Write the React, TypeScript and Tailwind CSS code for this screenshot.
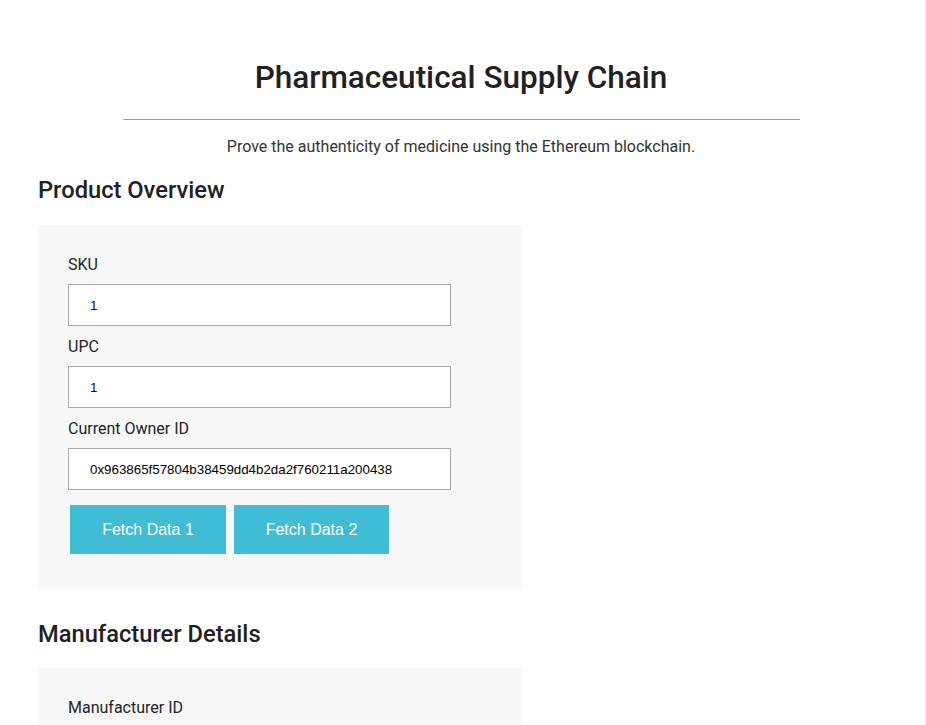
import React from "react";

type FieldProps = {
  label: string;
  value: string;
  valueClass?: string;
};

function Field({ label, value, valueClass }: FieldProps) {
  return (
    <div className="flex flex-col">
      <label className="text-[16px] leading-[24px] text-[#212529] mb-[7px]">{label}</label>
      <input
        readOnly
        value={value}
        className={`w-[383px] h-[42px] border border-[#a9a9a9] bg-white pl-[21px] text-[13.33px] outline-none ${valueClass ?? "text-black"}`}
        style={{ fontFamily: "'Liberation Sans', Arial, sans-serif" }}
      />
    </div>
  );
}

function App() {
  return (
    <div
      className="w-[926px] h-[725px] overflow-hidden bg-white border-r border-[#ececec] text-[#212529]"
      style={{ fontFamily: "Roboto, 'Liberation Sans', sans-serif" }}
    >
      <div className="pl-[38px] pr-[41px] pt-[56px]">
        <h1 className="text-center text-[31.5px] leading-[44px] font-medium text-[#212121]">
          Pharmaceutical Supply Chain
        </h1>
        <hr className="w-[677px] mx-auto mt-[19px] border-t border-[#9e9e9e]" />
        <p className="text-center text-[16px] leading-[24px] mt-[15px] text-[#333]">
          Prove the authenticity of medicine using the Ethereum blockchain.
        </p>

        <h2 className="text-[23.7px] leading-[32px] font-medium mt-[15px] text-[#212121]">Product Overview</h2>
        <div className="w-[484px] bg-[#f7f7f7] rounded-[4px] mt-[19px] pl-[30px] pt-[28px] pb-[35px] flex flex-col gap-[9px]">
          <Field label="SKU" value="1" valueClass="text-[#000080]" />
          <Field label="UPC" value="1" valueClass="text-[#000080]" />
          <Field label="Current Owner ID" value="0x963865f57804b38459dd4b2da2f760211a200438" />
          <div className="flex gap-[8px] pl-[2px] mt-[6px]">
            <button
              className="w-[156px] h-[49px] bg-[#40bcd4] text-white text-[16px]"
              style={{ fontFamily: "'Liberation Sans', Arial, sans-serif" }}
            >
              Fetch Data 1
            </button>
            <button
              className="w-[155px] h-[49px] bg-[#40bcd4] text-white text-[16px]"
              style={{ fontFamily: "'Liberation Sans', Arial, sans-serif" }}
            >
              Fetch Data 2
            </button>
          </div>
        </div>

        <h2 className="text-[23.7px] leading-[32px] font-medium mt-[29px] text-[#212121]">Manufacturer Details</h2>
        <div className="w-[484px] bg-[#f7f7f7] rounded-[4px] mt-[18px] pl-[30px] pt-[28px] pb-[34px] flex flex-col gap-[9px]">
          <Field label="Manufacturer ID" value="" />
        </div>
      </div>
    </div>
  );
}

export default App;
